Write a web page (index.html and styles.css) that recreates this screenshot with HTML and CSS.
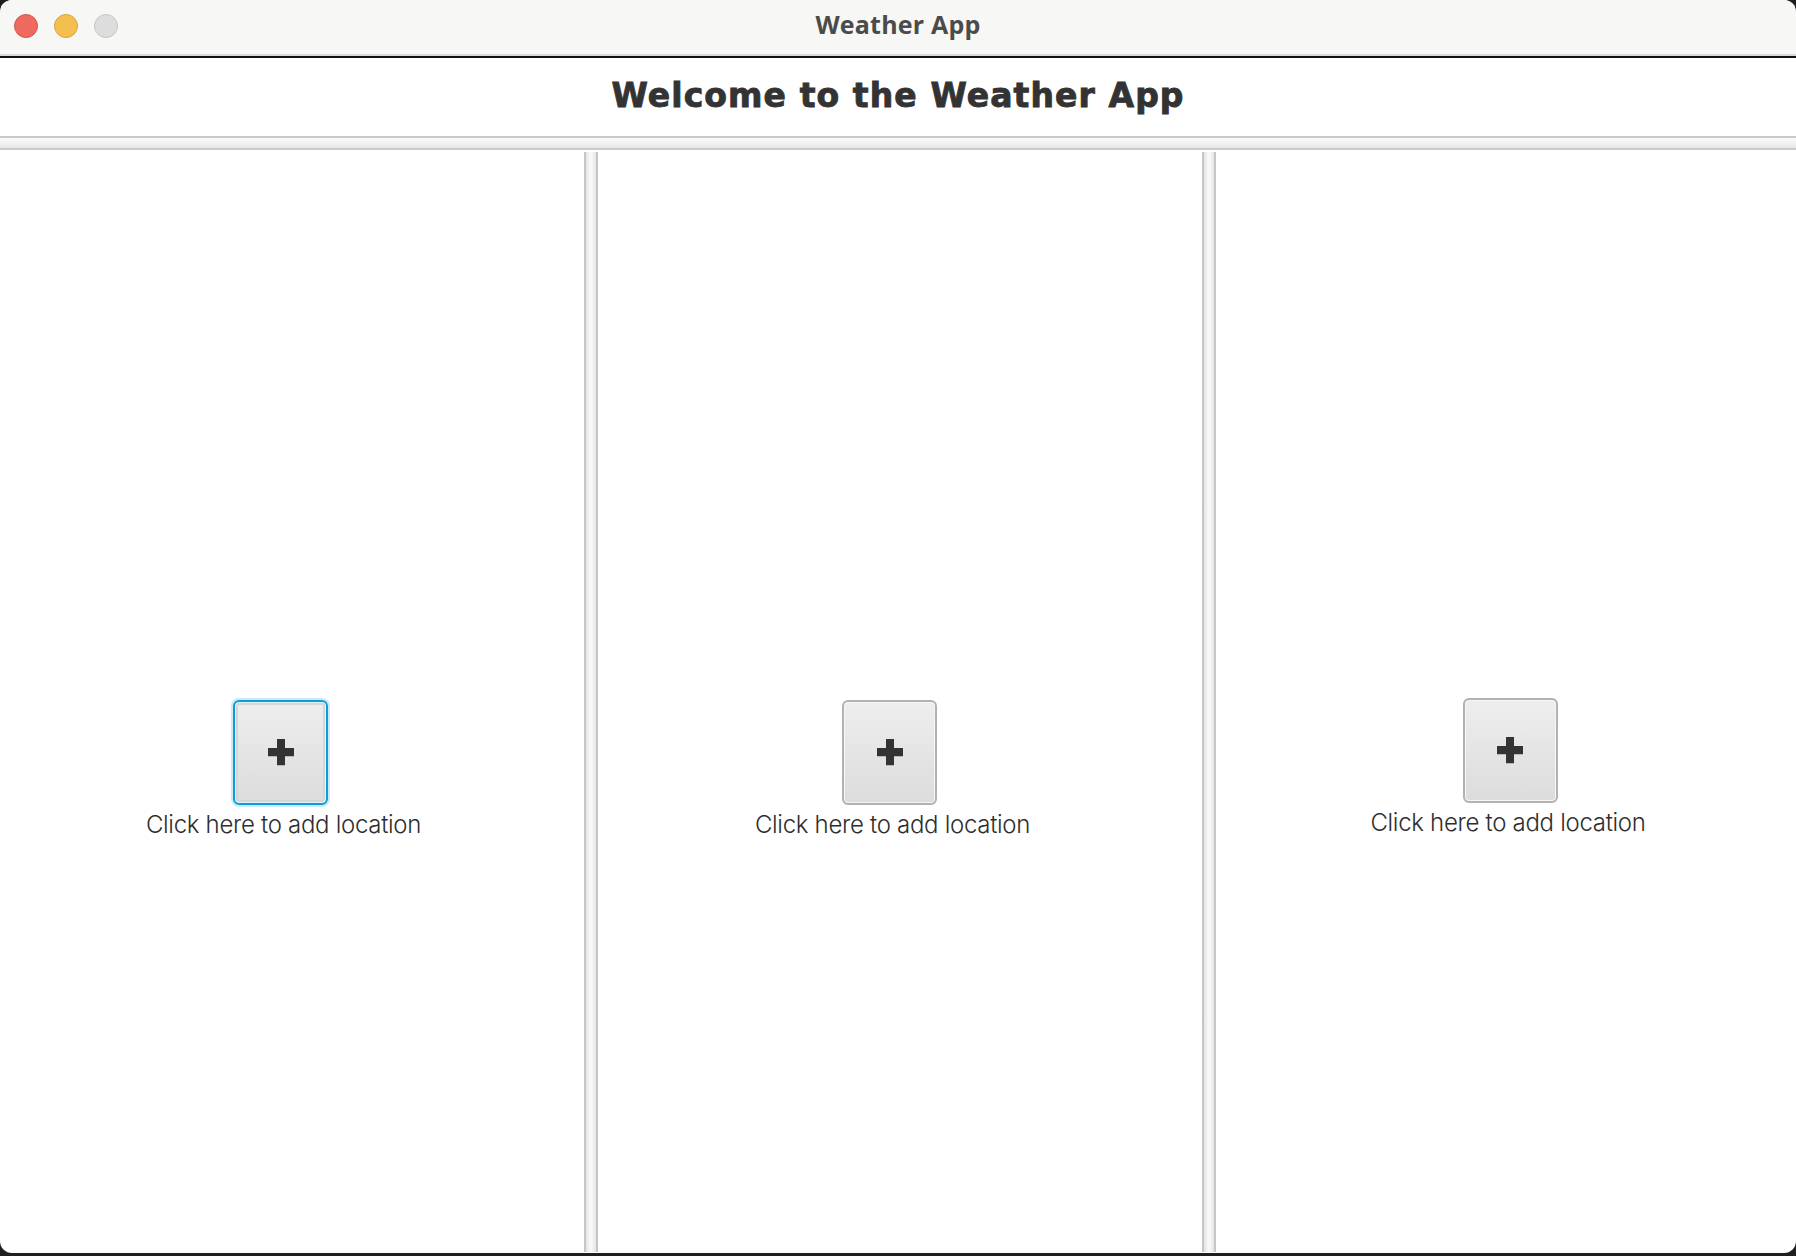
FILE: index.html
```html
<!DOCTYPE html>
<html>
<head>
<meta charset="utf-8">
<title>Weather App</title>
<link rel="stylesheet" href="styles.css">
</head>
<body>
<div class="window">
  <div class="titlebar">
    <div class="lights">
      <span class="light red"></span>
      <span class="light yellow"></span>
      <span class="light gray"></span>
    </div>
    <div class="title">Weather App</div>
  </div>
  <div class="header">
    <h1 class="heading">Welcome to the Weather App</h1>
  </div>
  <div class="hsep"></div>
  <div class="panes">
    <div class="pane pane-1">
      <div class="slot">
        <button class="add-btn focused" type="button">
          <svg class="plus" width="26" height="27" viewBox="0 0 26 27"><g fill="#b8b8b8"><rect x="9" y="1" width="8" height="26"/><rect x="0" y="10" width="26" height="8"/></g><g fill="#333"><rect x="9" y="0" width="8" height="26"/><rect x="0" y="9" width="26" height="8"/></g></svg>
        </button>
        <div class="label label-shift">Click here to add location</div>
      </div>
    </div>
    <div class="vdiv"></div>
    <div class="pane pane-2">
      <div class="slot">
        <button class="add-btn" type="button">
          <svg class="plus" width="26" height="27" viewBox="0 0 26 27"><g fill="#b8b8b8"><rect x="9" y="1" width="8" height="26"/><rect x="0" y="10" width="26" height="8"/></g><g fill="#333"><rect x="9" y="0" width="8" height="26"/><rect x="0" y="9" width="26" height="8"/></g></svg>
        </button>
        <div class="label label-shift">Click here to add location</div>
      </div>
    </div>
    <div class="vdiv"></div>
    <div class="pane pane-3">
      <div class="slot">
        <button class="add-btn" type="button">
          <svg class="plus" width="26" height="27" viewBox="0 0 26 27"><g fill="#b8b8b8"><rect x="9" y="1" width="8" height="26"/><rect x="0" y="10" width="26" height="8"/></g><g fill="#333"><rect x="9" y="0" width="8" height="26"/><rect x="0" y="9" width="26" height="8"/></g></svg>
        </button>
        <div class="label label-3">Click here to add location</div>
      </div>
    </div>
  </div>
</div>
</body>
</html>
```

FILE: styles.css
```css
html, body {
  margin: 0;
  padding: 0;
}
body {
  background: #1f1f1f;
  width: 1796px;
  height: 1256px;
  overflow: hidden;
}
.window {
  width: 1796px;
  height: 1253px;
  background: #ffffff;
  border-radius: 12px;
  overflow: hidden;
  display: flex;
  flex-direction: column;
}
.titlebar {
  height: 54px;
  flex: none;
  background: #f7f7f5;
  border-bottom: 2px solid #d9d9d9;
  box-shadow: 0 2px 0 #111;
  margin-bottom: 2px;
  position: relative;
  display: flex;
  align-items: center;
  justify-content: center;
}
.lights {
  position: absolute;
  left: 14px;
  top: 14px;
  display: flex;
  gap: 16px;
}
.light {
  width: 22px;
  height: 22px;
  border-radius: 50%;
  display: block;
}
.red { background: #ee6a5f; border: 1px solid #d4564b; }
.yellow { background: #f5bf4f; border: 1px solid #d9a33f; }
.gray { background: #dddddd; border: 1px solid #c6c6c6; }
.title {
  font-family: "Open Sans", "Liberation Sans", sans-serif;
  font-weight: 700;
  font-size: 25px;
  color: #4b4b4b;
  margin-bottom: 6px;
  letter-spacing: 0.2px;
}
.header {
  height: 78px;
  flex: none;
  display: flex;
  align-items: center;
  justify-content: center;
}
.heading {
  margin: 0 0 3px 0;
  font-family: "DejaVu Sans", "Liberation Sans", sans-serif;
  font-weight: 700;
  font-size: 33px;
  color: #333333;
  letter-spacing: 1.1px;
  -webkit-text-stroke: 0.9px #333333;
}
.hsep {
  height: 10px;
  flex: none;
  border-top: 2px solid #c9c9c9;
  border-bottom: 2px solid #c9c9c9;
  background: linear-gradient(#fbfbfb, #e6e6e6);
}
.panes {
  flex: 1;
  display: flex;
  min-height: 0;
}
.pane {
  display: flex;
  justify-content: center;
}
.pane-1 { width: 584px; padding-right: 22px; box-sizing: border-box; }
.pane-2 { width: 604px; padding-right: 20px; box-sizing: border-box; }
.pane-3 { flex: 1; padding-left: 9px; }
.vdiv {
  width: 10px;
  flex: none;
  margin-top: 2px;
  margin-bottom: 1px;
  border-left: 2px solid #c6c6c6;
  border-right: 2px solid #c6c6c6;
  background: linear-gradient(90deg, #e4e4e4, #fbfbfb 50%, #e4e4e4);
}
.slot {
  display: flex;
  flex-direction: column;
  align-items: center;
  padding-top: 550px;
}
.pane-3 .slot { padding-top: 548px; }
.add-btn {
  width: 95px;
  height: 105px;
  box-sizing: border-box;
  border: 2px solid #b2b2b2;
  border-radius: 6px;
  background: linear-gradient(#eeeeee, #dcdcdc);
  box-shadow: inset 0 0 0 1px #f6f6f6;
  display: flex;
  align-items: center;
  justify-content: center;
  padding: 0;
}
.add-btn.focused {
  border-color: #099ed9;
  box-shadow: 0 0 0 2px #cde9f6, inset 0 0 0 1px #e9f2f6, inset 0 0 0 3px #d6d6d6;
}
.plus { display: block; }
.label {
  margin-top: 5px;
  font-family: "Inter", "Open Sans", sans-serif;
  font-weight: 300;
  font-size: 24px;
  line-height: 30px;
  color: #2e2e2e;
  letter-spacing: -0.3px;
}
.label-shift { margin-left: 5px; }
.label-3 { margin-right: 5px; }
```
